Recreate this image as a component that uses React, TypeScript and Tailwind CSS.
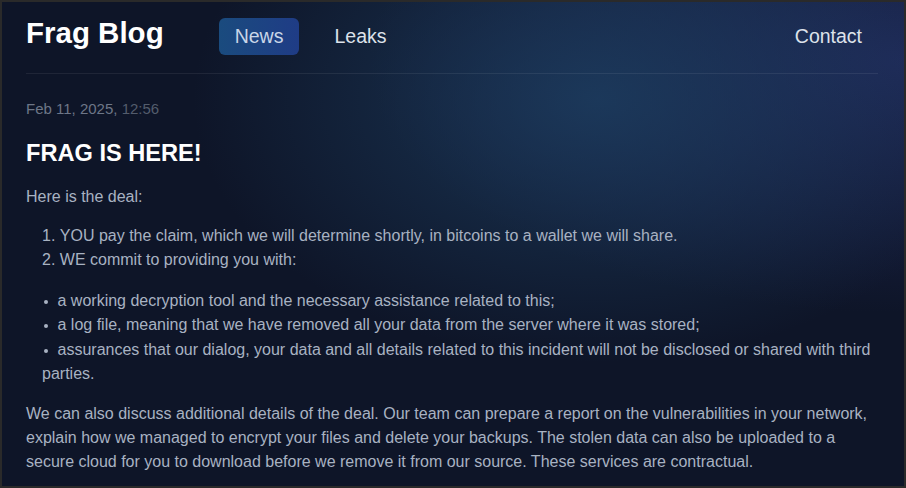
const BULLETS = [
  "a working decryption tool and the necessary assistance related to this;",
  "a log file, meaning that we have removed all your data from the server where it was stored;",
  "assurances that our dialog, your data and all details related to this incident will not be disclosed or shared with third parties.",
];

export default function App() {
  return (
    <div className="h-[488px] w-[906px] overflow-hidden border-2 border-[#2a2a2a] bg-[#0e1528] bg-[radial-gradient(ellipse_at_66%_20%,rgba(29,63,98,0.8),transparent_48%),radial-gradient(ellipse_at_100%_12%,rgba(36,46,102,0.75),transparent_42%)] pr-[26px] pl-6 font-['Liberation_Sans',Arial,sans-serif]">
      <header className="flex items-baseline border-b border-white/[0.07] pt-[14px] pb-[18px]">
        <span className="text-[29.5px] font-bold leading-[33px] text-white">Frag Blog</span>
        <nav className="ml-[55px] flex items-baseline gap-[19px]">
          <a className="rounded-md bg-[linear-gradient(90deg,#1a4b7e,#1f3c86)] px-4 py-[7px] text-[19.5px] leading-[23px] text-[#c9d6e8]">
            News
          </a>
          <a className="px-4 py-[7px] text-[19.5px] leading-[23px] text-[#dde2ea]">Leaks</a>
        </nav>
        <a className="ml-auto px-4 py-[7px] text-[19.5px] leading-[23px] text-[#dde2ea]">Contact</a>
      </header>

      <article className="text-[16px] leading-6 text-[#a8b2c2]">
        <div className="mt-[23px] text-[15px] text-[#6d7687]">
          Feb 11, 2025, <span className="text-[#535c6c]">12:56</span>
        </div>
        <h1 className="mt-[18px] text-[23.6px] font-bold leading-[29px] text-white">FRAG IS HERE!</h1>
        <p className="mt-[17px]">Here is the deal:</p>
        <ol className="mt-[15px] list-inside list-decimal pl-4">
          <li>YOU pay the claim, which we will determine shortly, in bitcoins to a wallet we will share.</li>
          <li>WE commit to providing you with:</li>
        </ol>
        <ul className="mt-[17px] pl-4 leading-[24.4px]">
          {BULLETS.map((b) => (
            <li key={b}>
              <span className="mr-[10px] ml-[1.5px] inline-block h-1 w-1 rounded-full bg-current align-middle" />
              {b}
            </li>
          ))}
        </ul>
        <p className="mt-[15px]">
          We can also discuss additional details of the deal. Our team can prepare a report on the vulnerabilities in your
          network, explain how we managed to encrypt your files and delete your backups. The stolen data can also be
          uploaded to a secure cloud for you to download before we remove it from our source. These services are
          contractual.
        </p>
      </article>
    </div>
  );
}
